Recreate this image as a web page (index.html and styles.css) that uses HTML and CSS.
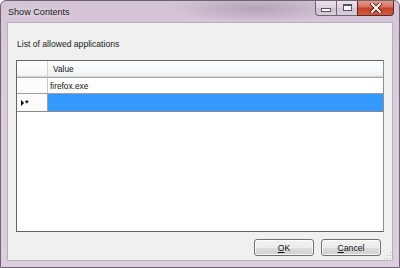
FILE: index.html
```html
<!DOCTYPE html>
<html>
<head>
<meta charset="utf-8">
<link rel="stylesheet" href="styles.css">
</head>
<body>
<div class="window">
  <div class="titlebar">
    <span class="title">Show Contents</span>
    <div class="caption">
      <div class="cbtn min"><span class="g-min"></span></div>
      <div class="cbtn max"><span class="g-max"></span></div>
      <div class="cbtn close">
        <svg width="12" height="10" viewBox="0 0 12 10">
          <path d="M2 1 L10 9 M10 1 L2 9" stroke="#4a1010" stroke-width="3.6" stroke-linecap="square"/>
          <path d="M2 1 L10 9 M10 1 L2 9" stroke="#ffffff" stroke-width="2" stroke-linecap="square"/>
        </svg>
      </div>
    </div>
  </div>
  <div class="client">
    <div class="label">List of allowed applications</div>
    <div class="grid">
      <div class="row head"><div class="rh"></div><div class="cell">Value</div></div>
      <div class="row data"><div class="rh"></div><div class="cell">firefox.exe</div></div>
      <div class="row newrow"><div class="rh"><span class="tri"></span><span class="star">*</span></div><div class="cell sel"></div></div>
    </div>
    <div class="buttons">
      <div class="btn"><u>O</u>K</div>
      <div class="btn"><u>C</u>ancel</div>
    </div>
    <div class="grip"></div>
  </div>
</div>
</body>
</html>
```
FILE: styles.css
```css
html, body {
  margin: 0;
  padding: 0;
  background: #ffffff;
}
.window {
  width: 400px;
  height: 268px;
  box-sizing: border-box;
  border: 1px solid #6e6470;
  border-radius: 6px 6px 0 0;
  background: linear-gradient(180deg, #d3c3d5 0%, #d9cbdb 20%, #dccfdd 100%);
  display: flex;
  flex-direction: column;
  padding: 0 6px 6px 6px;
  font-family: "Liberation Sans", Arial, sans-serif;
  position: relative;
  overflow: hidden;
}
.window::before {
  content: "";
  position: absolute;
  left: 170px;
  top: -6px;
  width: 170px;
  height: 28px;
  background: radial-gradient(ellipse at center, rgba(120,100,125,0.35) 0%, rgba(120,100,125,0) 70%);
}
.titlebar {
  height: 21px;
  display: flex;
  align-items: flex-start;
  position: relative;
}
.title {
  font-size: 9.1px;
  color: #1a1a1a;
  margin-top: 6px;
  margin-left: 1px;
  text-shadow: 0 0 6px rgba(255,255,255,0.9);
}
.caption {
  position: absolute;
  right: -1px;
  top: -1px;
  display: flex;
}
.cbtn {
  height: 16px;
  box-sizing: border-box;
  border: 1px solid #6f6573;
  border-top: none;
  display: flex;
  align-items: center;
  justify-content: center;
}
.min, .max {
  width: 21px;
  background: linear-gradient(180deg, rgba(255,255,255,0.55) 0%, rgba(235,225,238,0.5) 50%, rgba(205,190,210,0.55) 51%, rgba(220,210,225,0.6) 100%);
}
.min {
  border-radius: 0 0 0 4px;
  border-right: none;
}
.max {
  border-right: none;
}
.close {
  width: 37px;
  border-radius: 0 0 4px 0;
  background: linear-gradient(180deg, #e6a091 0%, #d7725f 45%, #c3412a 55%, #cf5b3f 100%);
  border-color: #5a2a24;
}
.g-min {
  width: 8px;
  height: 2px;
  background: #ffffff;
  border: 1px solid #5a5060;
  margin-top: 5px;
}
.g-max {
  width: 7px;
  height: 4px;
  border: 1px solid #5a5060;
  border-top-width: 2px;
  background: #ffffff;
  box-shadow: inset 0 0 0 1px #ffffff;
  outline: none;
}
.client {
  flex: 1;
  background: #f0f0f0;
  border: 1px solid #b9b0bb;
  display: flex;
  flex-direction: column;
  padding: 0 8px 4px 8px;
  position: relative;
}
.label {
  font-size: 8.6px;
  line-height: 12px;
  color: #1a1a1a;
  margin-top: 15px;
  margin-left: 1px;
  height: 12px;
}
.grid {
  margin-top: 10px;
  height: 172px;
  box-sizing: border-box;
  background: #ffffff;
  border: 1px solid #646464;
  border-right-color: #8e8e8e;
  font-size: 8.3px;
  color: #111111;
}
.row {
  display: flex;
  height: 17px;
  box-sizing: border-box;
}
.rh {
  width: 31px;
  box-sizing: border-box;
  border-right: 1px solid #c8c8c8;
  background: #f9f9f9;
  display: flex;
  align-items: center;
  padding-left: 4px;
}
.cell {
  flex: 1;
  display: flex;
  align-items: center;
  padding-left: 2px;
}
.head {
  height: 16px;
  border-bottom: 1px solid #d3d3d3;
  background: linear-gradient(180deg, #ffffff 0%, #f7f8fa 60%, #eef0f2 100%);
}
.head .rh {
  background: linear-gradient(180deg, #ffffff 0%, #f5f5f5 100%);
  border-right-color: #d3d3d3;
}
.head .cell {
  padding-left: 5px;
}
.data {
  border-top: 1px solid #a9a9a9;
  border-bottom: 1px solid #a0a0a0;
  height: 17px;
}
.data .rh {
  border-right-color: #c8c8c8;
  background: #fbfbfb;
}
.newrow {
  height: 18px;
  border-bottom: 1px solid #8a8a8a;
}
.newrow .rh {
  background: #fbfbfb;
  border-right: 1px solid #a0a0a0;
}
.sel {
  background: #3399ff;
}
.tri {
  width: 0;
  height: 0;
  border-left: 3px solid #000000;
  border-top: 3px solid transparent;
  border-bottom: 3px solid transparent;
}
.star {
  font-size: 9px;
  font-weight: bold;
  margin-left: 1px;
  line-height: 9px;
  margin-top: 2px;
}
.buttons {
  margin-top: 7px;
  display: flex;
  justify-content: flex-end;
  gap: 7px;
  padding-right: 3px;
}
.btn {
  width: 60px;
  height: 17px;
  box-sizing: border-box;
  border: 1px solid #707070;
  border-radius: 3px;
  background: linear-gradient(180deg, #f2f2f2 0%, #ebebeb 50%, #dddddd 51%, #cfcfcf 100%);
  box-shadow: inset 0 0 0 1px rgba(255,255,255,0.8);
  font-size: 8.6px;
  color: #111111;
  display: flex;
  align-items: center;
  justify-content: center;
}
.btn u {
  text-decoration-thickness: 1px;
  text-underline-offset: 1px;
}
.grip {
  position: absolute;
  right: 1px;
  bottom: 1px;
  width: 8px;
  height: 8px;
  background-image: radial-gradient(circle, #b8b8b8 0.8px, transparent 1px);
  background-size: 3px 3px;
  clip-path: polygon(100% 0, 100% 100%, 0 100%);
}
```
